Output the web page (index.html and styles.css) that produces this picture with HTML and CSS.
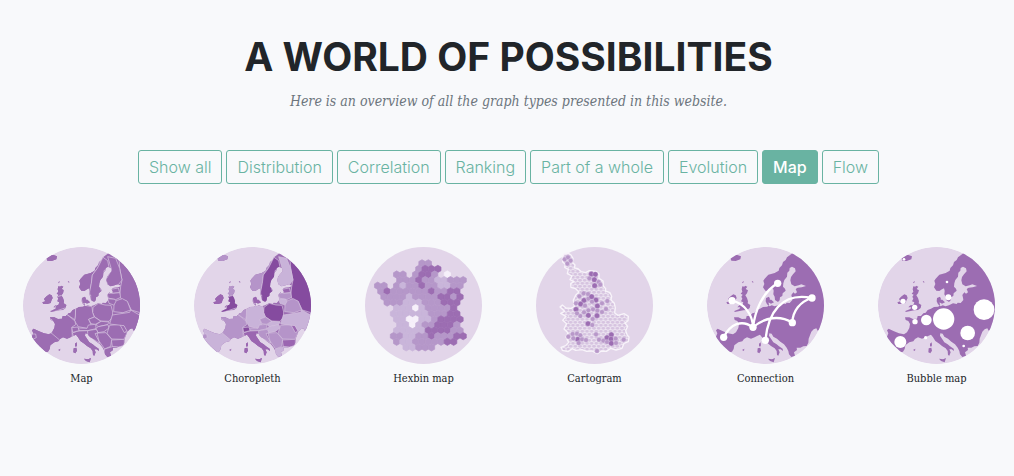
FILE: index.html
```html
<!DOCTYPE html>
<html lang="en">
  <head>
    <meta charset="UTF-8" />
    <meta name="viewport" content="width=device-width, initial-scale=1.0" />
    <title>A world of possibilities</title>
    <link rel="stylesheet" href="styles.css">
  </head>
  <body>
    <!-- Shared shapes -->
    <svg class="shapes" aria-hidden="true">
      <defs>
        <clipPath id="disc"><circle cx="197.500" cy="196.500" r="175.500" /></clipPath>
        <path id="land" d="M278 40L270 46 262 52 258 60 250 66 247 76 239 84 237 92 225 99 206 104 195 116 191 122 194 132 190 142 197 152 206 153 214 148 220 145 222 152 221 163 225 170 226 180 235 186 240 181 241 172 248 168 249 160 258 152 256 146 250 140 251 130 254 120 262 110 263 98 269 92 270 84 277 80 286 85 288 94 280 103 274 111 272 121 275 133 285 139 297 136 305 133 319 138 306 142 294 143 288 147 292 157 286 161 281 157 275 165 277 173 278 180 270 189 261 188 258 192 247 190 235 196 225 199 216 196 210 199 202 193 198 184 199 174 208 170 211 177 206 185 208 194 203 200 190 201 181 206 171 210 165 218 158 220 151 228 141 228 139 236 127 237 116 232 103 232 105 240 113 243 118 252 116 264 109 277 100 283 85 280 70 274 54 266 49 271 53 280 49 290 52 302 66 326 80 340 97 335 102 327 104 316 116 307 128 304 133 297 142 292 154 296 165 292 172 288 181 284 187 292 194 303 206 311 214 318 225 325 231 333 232 345 236 347 240 337 236 328 243 328 250 333 249 326 238 319 231 313 221 307 214 296 208 287 209 280 216 281 221 290 232 296 242 305 253 313 261 323 266 333 268 343 275 351 286 347 283 337 292 330 291 323 302 323 311 319 321 318 326 308 327 296 331 286 335 275 342 268 350 265 354 272 380 262 380 30ZM92 53L101 45 113 45 124 49 122 58 108 63 95 62ZM126 148L128 139 134 140 136 137 143 140 138 147 145 151 142 160 137 166 142 174 145 184 144 190 152 195 150 204 142 210 131 211 120 213 105 216 104 213 119 207 122 202 113 202 119 196 128 195 131 187 124 184 128 176 125 170 129 164 123 161 128 155ZM91 170L101 163 108 166 111 174 107 182 105 189 95 192 83 192 80 187 89 184 85 177ZM202 176L215 179 223 187 214 191 206 187ZM178 311L183 307 184 316 181 321 178 317ZM174 325L182 323 184 332 179 340 173 337ZM205 356L217 358 226 354 222 367 211 363ZM127 127L133 123 130 130ZM156 125L160 123 161 129ZM127 330L134 326 133 333Z" />
        <clipPath id="coast"><use href="#land" /></clipPath>
        <g id="europe">
          <use href="#land" class="land" />
          <g class="borders" clip-path="url(#coast)">
            <path class="top" d="M268 30L310 52 312 85 319 120 315 140 312 170 320 180 334 184 347 210 380 220 380 30Z" />
            <path class="mid" d="M180 90L230 90 252 68 262 52 260 62 245 85 230 105 227 130 222 155 190 160Z" />
            <path class="top" d="M262 52L276 62 280 82 265 92 266 115 252 138 258 155 240 188 222 182 222 155 227 130 230 105 245 85Z" />
            <path class="low" d="M276 50L300 55 312 85 319 120 306 137 280 142 270 120 288 90Z" />
            <path class="high" d="M286 148L308 144 312 158 292 160Z" />
            <path class="mid" d="M275 160L292 160 312 158 315 172 300 179 277 174Z" />
            <path class="low" d="M276 176L298 178 304 187 294 195 280 190Z" />
            <path class="mid" d="M302 182L320 176 335 184 345 210 322 218 294 215 295 195Z" />
            <path class="top" d="M232 202L248 190 268 195 286 196 291 216 290 232 280 244 255 243 236 230 231 218Z" />
            <path class="low" d="M180 202L202 195 229 200 231 218 236 231 219 238 226 254 214 265 188 260 177 243 179 222Z" />
            <path class="mid" d="M219 238L236 231 256 244 239 253 226 251Z" />
            <path class="low" d="M241 254L256 244 281 246 275 254 248 260Z" />
            <path class="mid" d="M188 264L214 265 218 255 240 253 241 266 216 272 190 271Z" />
            <path class="low" d="M241 265L248 260 277 254 280 264 265 275 247 278Z" />
            <path class="mid" d="M282 256L312 253 323 262 333 281 325 298 288 297 274 280Z" />
            <path class="high" d="M312 253L325 255 335 272 326 278Z" />
            <path class="high" d="M287 300L326 298 326 314 311 322 290 320Z" />
            <path class="mid" d="M216 272L241 268 248 278 238 281 253 310 210 285ZM244 279L271 278 288 298 285 319 267 327 250 303Z" />
            <path class="low" d="M267 327L290 320 311 322 300 360 260 360Z" />
            <path class="low" d="M290 225L342 217 345 210 380 230 380 280 335 275 325 257 282 252Z" />
            <path class="high" d="M170 279L187 273 216 272 216 285 255 325 240 370 200 375 200 315 175 292Z" />
            <path class="top" d="M168 263L187 261 190 272 171 277Z" />
            <path class="mid" d="M90 228L152 222 178 243 180 254 168 262 170 289 150 304 130 303 107 293 110 240Z" />
            <path class="low" d="M40 260L108 280 133 301 100 345 50 340Z" />
            <path class="mid" d="M44 282L60 282 62 293 51 298Z" />
            <path class="mid" d="M160 208L180 202 179 228 177 239 155 224Z" />
            <path class="mid" d="M120 130L150 130 142 166 120 172Z" />
            <path class="top" d="M120 171L140 166 160 200 100 220 128 190Z" />
            <path class="high" d="M75 160L115 160 113 198 75 198ZM195 165L225 165 225 192 200 190Z" />
            <path class="mid" d="M85 40L130 40 130 66 85 66Z" />
            <path class="high" d="M170 305L188 305 188 345 170 345Z" />
          </g>
        </g>
      </defs>
    </svg>

    <section class="overview">
      <header>
        <h1>A world of possibilities</h1>
        <p class="subtitle">Here is an overview of all the graph types presented in this website.</p>
      </header>

      <div class="filters">
        <button type="button" class="filter-btn">Show all</button>
        <button type="button" class="filter-btn">Distribution</button>
        <button type="button" class="filter-btn">Correlation</button>
        <button type="button" class="filter-btn">Ranking</button>
        <button type="button" class="filter-btn">Part of a whole</button>
        <button type="button" class="filter-btn">Evolution</button>
        <button type="button" class="filter-btn active">Map</button>
        <button type="button" class="filter-btn">Flow</button>
      </div>

      <div class="charts">
        <a class="chart" href="#map">
          <svg class="thumb map" viewBox="22 21 351 351" aria-hidden="true">
            <g clip-path="url(#disc)">
              <circle class="sea" cx="197.500" cy="196.500" r="176" />
              <use href="#europe" />
            </g>
          </svg>
          <span>Map</span>
        </a>
        <a class="chart" href="#choropleth">
          <svg class="thumb choropleth" viewBox="22 21 351 351" aria-hidden="true">
            <g clip-path="url(#disc)">
              <circle class="sea" cx="197.500" cy="196.500" r="176" />
              <use href="#europe" />
            </g>
          </svg>
          <span>Choropleth</span>
        </a>
        <a class="chart" href="#hexbin">
          <svg class="thumb" viewBox="22 21 351 351" aria-hidden="true">
            <circle class="sea" cx="197.500" cy="196.500" r="175.500" />
            <g id="hexes"></g>
          </svg>
          <span>Hexbin map</span>
        </a>
        <a class="chart" href="#cartogram">
          <svg class="thumb" viewBox="22 21 351 351" aria-hidden="true">
            <defs>
              <pattern id="cells" width="14" height="18" patternUnits="userSpaceOnUse">
                <rect class="cell-gap" width="14" height="18" />
                <ellipse class="cell" cx="7" cy="4" rx="6" ry="4" />
                <ellipse class="cell" cx="0" cy="13" rx="6" ry="4" />
                <ellipse class="cell" cx="14" cy="13" rx="6" ry="4" />
              </pattern>
            </defs>
            <circle class="sea" cx="197.500" cy="196.500" r="175.500" />
            <path class="outline" d="M101 51L106 42 118 39 127 45 133 55 131 67 139 75 137 84 148 86 158 95 171 98 182 92 202 94 211 101 211 115 223 123 224 138 231 146 230 153 244 158 249 169 247 180 257 190 260 204 258 219 268 226 286 221 299 229 298 242 289 249 297 259 291 272 296 286 301 291 299 305 286 310 280 325 262 330 246 325 233 334 218 333 206 341 190 333 174 334 160 329 141 331 131 326 118 335 101 331 97 322 111 317 120 307 112 291 118 278 106 267 114 251 102 241 112 229 96 220 108 214 94 201 101 195 112 204 127 205 137 200 134 181 141 166 151 156 141 146 127 142 126 131 136 125 124 119 130 108 116 101 119 88 108 82 110 73 102 66Z" />
            <g class="dots" id="dots"></g>
          </svg>
          <span>Cartogram</span>
        </a>
        <a class="chart" href="#connection">
          <svg class="thumb" viewBox="22 21 351 351" aria-hidden="true">
            <g clip-path="url(#disc)">
              <circle class="sea" cx="197.500" cy="196.500" r="176" />
              <use href="#land" class="land" />
            </g>
            <path class="links" d="M72 292C92 252 126 237 160 262M160 262C159 225 135 190 97 182M160 262C166 215 187 157 234 130M160 262C195 231 241 225 278 248M278 248C279 214 301 184 337 174M197 301C205 220 245 155 337 174" />
            <g class="white">
              <circle cx="72" cy="292" r="11" />
              <circle cx="160" cy="262" r="11" />
              <circle cx="97" cy="182" r="11" />
              <circle cx="234" cy="130" r="11" />
              <circle cx="278" cy="248" r="11" />
              <circle cx="337" cy="174" r="11" />
              <circle cx="197" cy="301" r="11" />
            </g>
          </svg>
          <span>Connection</span>
        </a>
        <a class="chart" href="#bubble">
          <svg class="thumb" viewBox="22 21 351 351" aria-hidden="true">
            <g clip-path="url(#disc)">
              <circle class="sea" cx="197.500" cy="196.500" r="176" />
              <use href="#land" class="land" />
            </g>
            <g class="white">
              <circle cx="340" cy="209" r="31" />
              <circle cx="219" cy="237" r="32" />
              <circle cx="291" cy="279" r="22" />
              <circle cx="89" cy="306" r="18" />
              <circle cx="167" cy="240" r="16" />
              <circle cx="133" cy="245" r="8" />
              <circle cx="132" cy="202" r="8" />
              <circle cx="97" cy="184" r="8" />
              <circle cx="233" cy="172" r="9" />
              <circle cx="229" cy="126" r="4" />
              <circle cx="165" cy="293" r="5" />
              <circle cx="279" cy="318" r="4" />
              <circle cx="100" cy="58" r="4" />
            </g>
          </svg>
          <span>Bubble map</span>
        </a>
      </div>
    </section>

    <script>
      const SVG = "http://www.w3.org/2000/svg";

      // One string per row, 1 = light, 2 = medium, 3 = dark, w = white
      const hexRows = [
        ".......22......",
        "......2333.....",
        "...22.2332.w...",
        "...22232211222.",
        "22.21223221122.",
        "2322222232233..",
        ".2222122223323.",
        ".222111222333..",
        "...111w122223..",
        "..11111122233..",
        "...11ww1123333.",
        "...11w1223332..",
        "...11111333322.",
        "..221122322233.",
        "...2112222233..",
        "....11222......",
      ];
      const hexes = document.getElementById("hexes");
      hexRows.forEach((row, r) => {
        [...row].forEach((cell, c) => {
          if (cell === ".") return;
          const x = 60 + 19 * c + (r % 2) * 9.5;
          const y = 70 + 16.8 * r;
          const points = [];
          for (let i = 0; i < 6; i++) {
            const a = (Math.PI / 3) * i + Math.PI / 6;
            points.push(x + 11 * Math.cos(a) + "," + (y + 11 * Math.sin(a)));
          }
          const hex = document.createElementNS(SVG, "polygon");
          hex.setAttribute("points", points.join(" "));
          hex.setAttribute("class", "hex hex-" + cell);
          hexes.appendChild(hex);
        });
      });

      // x, y, dark (1) or medium (0)
      const dots = [
        [108, 58, 0], [118, 52, 0], [126, 62, 0], [116, 71, 0], [188, 102, 1],
        [200, 103, 1], [182, 115, 0], [197, 119, 1], [210, 126, 0], [198, 137, 1],
        [215, 134, 0], [165, 160, 0], [178, 162, 0], [152, 169, 0], [166, 181, 1],
        [179, 176, 0], [189, 170, 1], [202, 180, 1], [142, 190, 0], [156, 192, 1],
        [169, 197, 0], [142, 208, 1], [190, 185, 0], [206, 198, 1], [193, 208, 0],
        [179, 211, 0], [166, 217, 0], [206, 212, 0], [179, 226, 1], [205, 227, 1],
        [192, 237, 0], [155, 228, 0], [220, 216, 0], [178, 251, 1], [191, 255, 0],
        [220, 190, 0], [232, 207, 0], [145, 220, 0], [236, 183, 0], [132, 282, 0],
        [145, 281, 0], [155, 286, 0], [147, 298, 1], [160, 298, 0], [172, 300, 0],
        [134, 295, 0], [150, 309, 0], [119, 290, 0], [202, 283, 0], [211, 299, 0],
        [224, 302, 0], [235, 293, 1], [248, 284, 1], [247, 297, 1], [235, 306, 0],
        [248, 310, 1], [261, 296, 0], [262, 309, 0], [285, 299, 0], [205, 333, 0],
      ];
      const dotLayer = document.getElementById("dots");
      dots.forEach(([x, y, dark]) => {
        const dot = document.createElementNS(SVG, "ellipse");
        dot.setAttribute("cx", x);
        dot.setAttribute("cy", y);
        dot.setAttribute("rx", dark ? 8 : 7);
        dot.setAttribute("ry", dark ? 8 : 7);
        dot.setAttribute("class", dark ? "dot-dark" : "dot-mid");
        dotLayer.appendChild(dot);
      });
    </script>
  </body>
</html>
```
FILE: styles.css
```css
:root {
  --green: #69b3a2;
  --sea: #e2d5e9;
  --purple: #9c6db2;
  --font-title: Inter, "Open Sans", sans-serif;
  --font-text: "DejaVu Serif Condensed", "DejaVu Serif", serif;
}
* {
  box-sizing: border-box;
}
body {
  margin: 0;
  background: #f8f9fb;
  color: #212529;
  font-family: var(--font-text);
  overflow-x: hidden;
}
.shapes {
  display: block;
  width: 0;
  height: 0;
}
.overview {
  padding: 33px 0 80px 3px;
  text-align: center;
}
h1 {
  margin: 0;
  font-family: var(--font-title);
  font-size: 39px;
  line-height: 48px;
  font-weight: 700;
  text-transform: uppercase;
}
.subtitle {
  margin: 8px 0 37px;
  color: #6c757d;
  font-size: 14px;
  line-height: 24px;
  font-style: italic;
}
.filters {
  display: flex;
  flex-wrap: wrap;
  justify-content: center;
  gap: 4px;
  margin-bottom: 63px;
}
.filter-btn {
  height: 34px;
  padding: 0 10px;
  border: 1px solid var(--green);
  border-radius: 3px;
  background: transparent;
  color: var(--green);
  font-family: var(--font-title);
  font-size: 16px;
  font-weight: 300;
  cursor: pointer;
}
.filter-btn:hover,
.filter-btn.active {
  background: var(--green);
  color: #fff;
}
.filter-btn.active {
  font-weight: 500;
}
.charts {
  display: grid;
  grid-template-columns: repeat(6, 1fr);
  margin: 0 -8px 0 -7px;
}
.chart {
  display: flex;
  flex-direction: column;
  align-items: center;
  gap: 7px;
  color: #212529;
  font-size: 11px;
  line-height: 16px;
  text-decoration: none;
}
.thumb {
  width: 117px;
  height: 117px;
}

/* Maps */
.sea {
  fill: var(--sea);
}
.land {
  fill: var(--purple);
}
.map {
  --low: #9c6db2;
  --mid: #9c6db2;
  --high: #9c6db2;
  --top: #9c6db2;
  --border: #dac8e3;
}
.choropleth {
  --low: #c9b3d9;
  --mid: #b594c9;
  --high: #9b66b1;
  --top: #854b9f;
  --border: #d4c2df;
}
.borders {
  stroke: var(--border);
  stroke-width: 2;
}
.low {
  fill: var(--low);
}
.mid {
  fill: var(--mid);
}
.high {
  fill: var(--high);
}
.top {
  fill: var(--top);
}
.white {
  fill: #fff;
}
.links {
  fill: none;
  stroke: #fff;
  stroke-width: 7;
}

/* Hexbin */
.hex {
  stroke-width: 2;
  stroke-linejoin: round;
}
.hex-1 {
  fill: #c9b5da;
  stroke: #c9b5da;
}
.hex-2 {
  fill: #b597c9;
  stroke: #b597c9;
}
.hex-3 {
  fill: #9c6db2;
  stroke: #9c6db2;
}
.hex-w {
  fill: #f6f0fa;
  stroke: #f6f0fa;
}

/* Cartogram */
.outline {
  fill: url(#cells);
  stroke: #f8f4fa;
  stroke-width: 4;
  stroke-linejoin: round;
}
.cell-gap {
  fill: #eee6f2;
}
.cell {
  fill: #d6c3e0;
}
.dots {
  stroke: #e5d9ec;
  stroke-width: 1;
}
.dot-mid {
  fill: #b898c9;
}
.dot-dark {
  fill: #9c6db2;
}
```
